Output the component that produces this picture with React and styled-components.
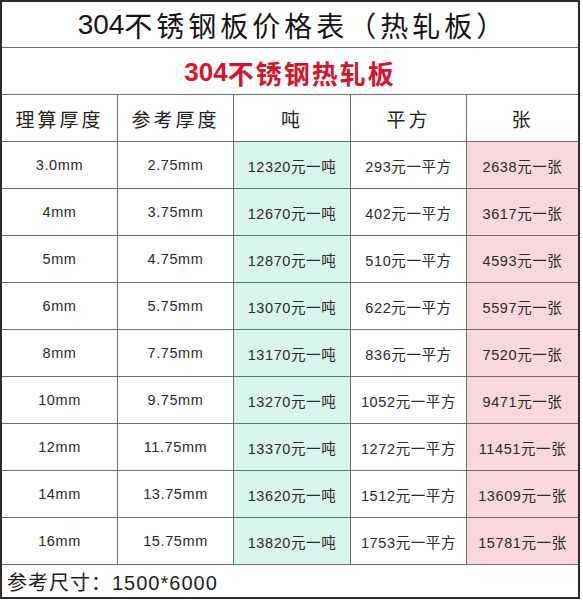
import React from 'react';
import styled, { createGlobalStyle } from 'styled-components';

const rows = [
  ['3.0mm', '2.75mm', 12320, 293, 2638],
  ['4mm', '3.75mm', 12670, 402, 3617],
  ['5mm', '4.75mm', 12870, 510, 4593],
  ['6mm', '5.75mm', 13070, 622, 5597],
  ['8mm', '7.75mm', 13170, 836, 7520],
  ['10mm', '9.75mm', 13270, 1052, 9471],
  ['12mm', '11.75mm', 13370, 1272, 11451],
  ['14mm', '13.75mm', 13620, 1512, 13609],
  ['16mm', '15.75mm', 13820, 1753, 15781],
];

const headers = ['理算厚度', '参考厚度', '吨', '平方', '张'];

function App() {
  return (
    <>
      <GlobalStyle />
      <Sheet>
        <TitleRow>
          <Digits>304</Digits>不锈钢板价格表（热轧板）
        </TitleRow>
        <SubRow>
          <Digits>304</Digits>不锈钢热轧板
        </SubRow>
        <Grid>
          {headers.map(h => (
            <HeadCell key={h}>{h}</HeadCell>
          ))}
          {rows.map(r => (
            <React.Fragment key={r[0]}>
              <Cell>{r[0]}</Cell>
              <Cell>{r[1]}</Cell>
              <Cell tone="teal">{r[2]}元一吨</Cell>
              <Cell>{r[3]}元一平方</Cell>
              <Cell tone="pink">{r[4]}元一张</Cell>
            </React.Fragment>
          ))}
        </Grid>
        <Footer>参考尺寸：1500*6000</Footer>
      </Sheet>
    </>
  );
}

export default App;

const GlobalStyle = createGlobalStyle`
    body {
        margin: 0;
        background: #fff;
        font-family: "Liberation Sans", "Noto Sans CJK SC", sans-serif;
    }
`

const Sheet = styled.div`
    box-sizing: border-box;
    width: 580px;
    height: 599px;
    border: 2px solid #2b2b2b;
    display: flex;
    flex-direction: column;
    background: #fff;
`

const TitleRow = styled.div`
    height: 46px;
    box-sizing: border-box;
    border-bottom: 1px solid #6e6e6e;
    display: flex;
    align-items: center;
    justify-content: center;
    font-family: "Noto Sans CJK SC", sans-serif;
    font-size: 28px;
    letter-spacing: 4px;
    color: #151515;
    padding-left: 6px;
`

const SubRow = styled.div`
    height: 47px;
    box-sizing: border-box;
    border-bottom: 1px solid #6e6e6e;
    display: flex;
    align-items: center;
    justify-content: center;
    font-family: "Noto Sans CJK SC", sans-serif;
    font-size: 26px;
    font-weight: 700;
    letter-spacing: 2px;
    color: #d6152b;
    padding-top: 2px;
`

const Digits = styled.span`
    font-family: "Liberation Sans", sans-serif;
    letter-spacing: 0;
`

const Grid = styled.div`
    display: grid;
    grid-template-columns: 115px 116px 117px 116px 1fr;
    grid-auto-rows: 47px;
`

const HeadCell = styled.div`
    box-sizing: border-box;
    border-bottom: 1px solid #6e6e6e;
    border-left: 1px solid #6e6e6e;
    display: flex;
    align-items: center;
    justify-content: center;
    font-family: "Noto Sans CJK SC", sans-serif;
    font-size: 19px;
    letter-spacing: 3px;
    color: #222;
    &:first-child {
        border-left: none;
    }
`

const Cell = styled.div`
    box-sizing: border-box;
    border-bottom: 1px solid #6e6e6e;
    border-left: 1px solid #6e6e6e;
    display: flex;
    align-items: center;
    justify-content: center;
    font-size: 14.5px;
    color: #2a2a2a;
    letter-spacing: 0.6px;
    background: ${p => (p.tone === 'teal' ? '#d9f6ee' : p.tone === 'pink' ? '#f8d7df' : '#fff')};
    &:nth-child(5n + 1) {
        border-left: none;
    }
`

const Footer = styled.div`
    flex: 1;
    display: flex;
    align-items: center;
    padding-left: 5px;
    font-size: 20px;
    color: #1e1e1e;
    letter-spacing: 1px;
`
